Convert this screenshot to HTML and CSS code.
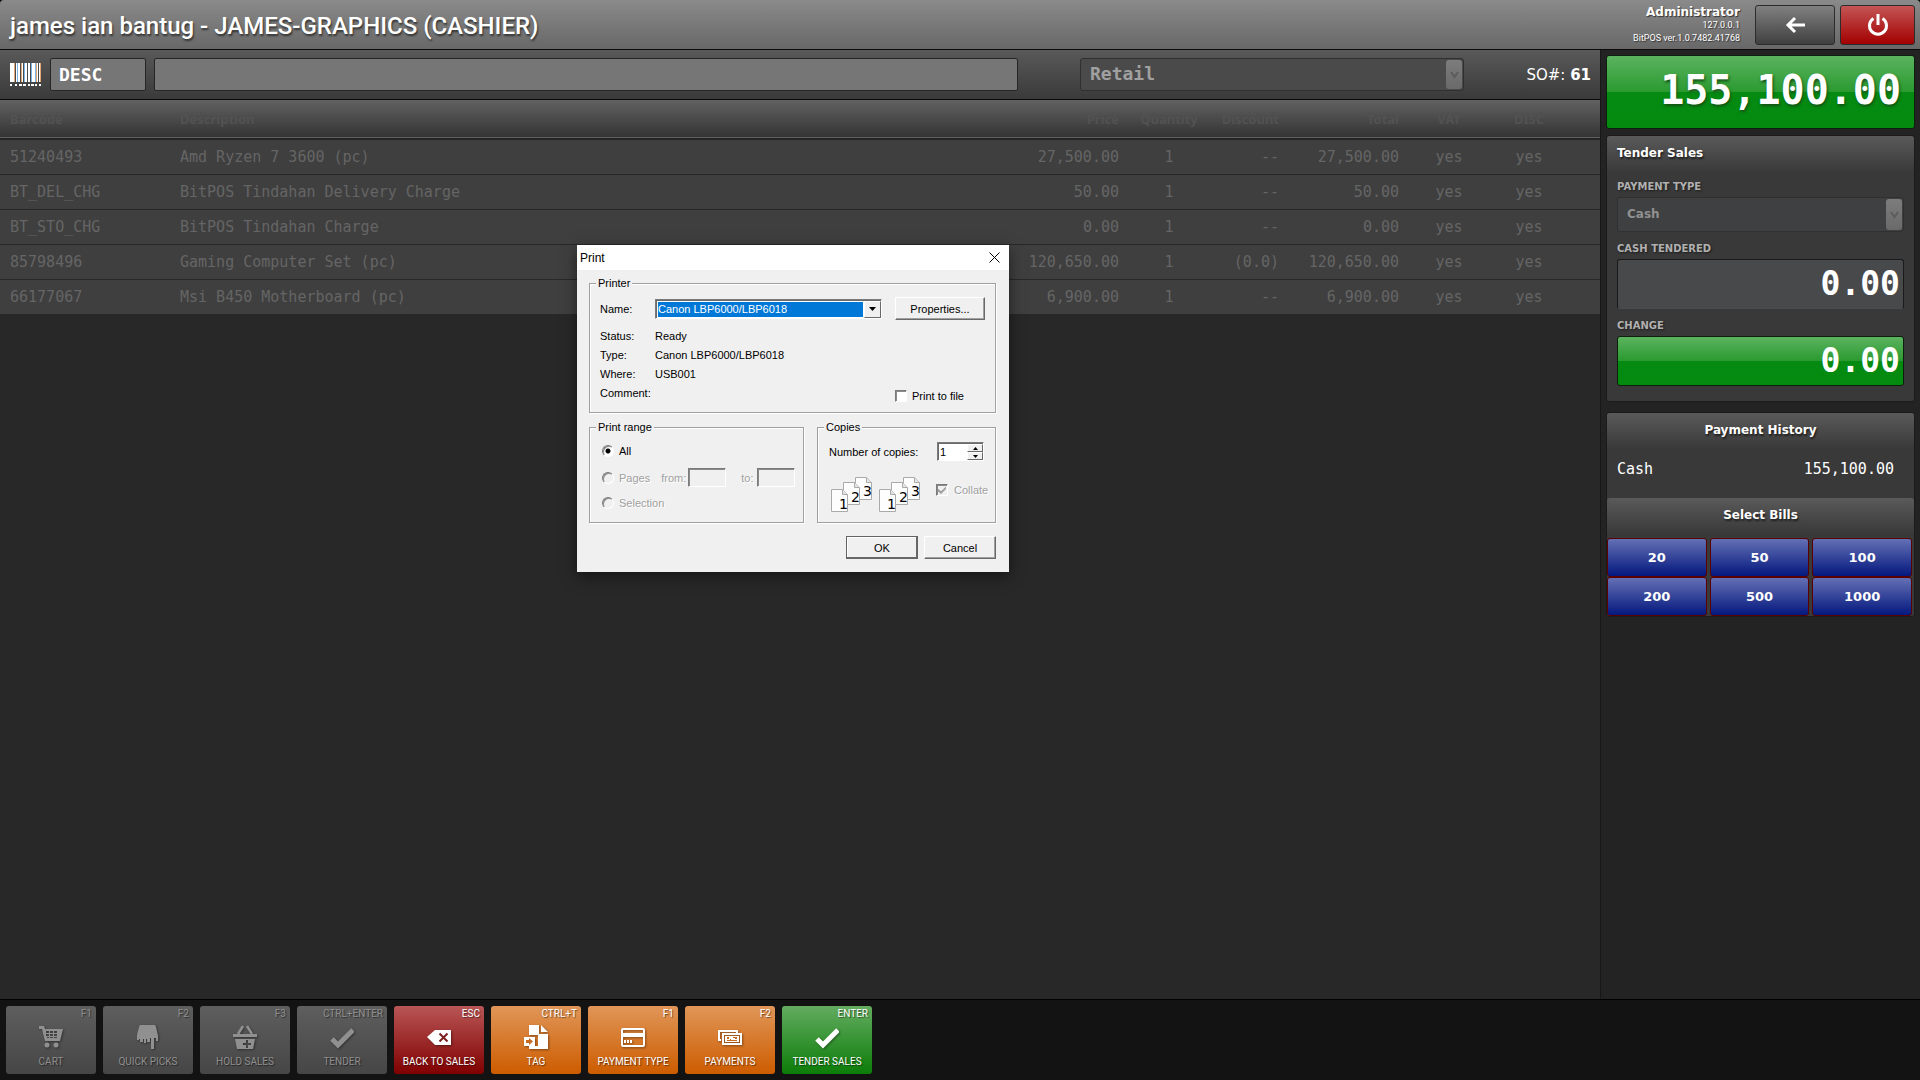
FILE: index.html
```html
<!DOCTYPE html>
<html lang="en">
<head>
<meta charset="utf-8">
<title>BitPOS</title>
<link rel="stylesheet" href="styles.css">
</head>
<body>
<div class="app">
  <header class="titlebar">
    <h1 class="title">james ian bantug - JAMES-GRAPHICS (CASHIER)</h1>
    <div class="user">
      <strong class="user-name">Administrator</strong>
      <span>127.0.0.1</span>
      <span>BitPOS ver.1.0.7482.41768</span>
    </div>
    <button class="head-btn back" aria-label="Back">
      <svg width="20" height="18" viewBox="0 0 20 18"><path d="M10 2 3 9l7 7M3 9h17" fill="none" stroke="#fff" stroke-width="3"/></svg>
    </button>
    <button class="head-btn power" aria-label="Power">
      <svg width="22" height="24" viewBox="0 0 22 24"><path d="M6.500 5.500a8.500 8.500 0 1 0 9 0" fill="none" stroke="#fff" stroke-width="3"/><path d="M11 1v11" stroke="#fff" stroke-width="3"/></svg>
    </button>
  </header>

  <div class="work">
    <main class="sales">
      <div class="toolbar">
        <svg class="barcode" width="31" height="23" viewBox="0 0 31 23" shape-rendering="crispEdges">
          <path fill="#fff" d="M0 0h4v19H0zM6 0h1v19H6zM8 0h2v19H8zM12 0h1v19h-1zM15 0h2v19h-2zM18 0h2v19h-2zM22 0h3v19h-3zM27 0h1v19h-1zM29 0h1v19h-1zM0 21h2v2H0zM5 21h2v2H5zM9 21h3v2H9zM13 21h3v2h-3zM18 21h2v2h-2zM21 21h3v2h-3zM25 21h2v2h-2zM29 21h2v2h-2z"/>
          <path fill="#e0a870" d="M4 0h1v19H4zM11 0h1v19h-1zM26 0h1v19h-1zM30 0h1v19h-1z"/>
          <path fill="#7cb4e8" d="M7 0h1v19H7zM14 0h1v19h-1zM21 0h1v19h-1zM25 0h1v19h-1z"/>
        </svg>
        <input class="field mode" type="text" value="DESC" aria-label="Search mode">
        <input class="field search" type="text" aria-label="Search item">
        <div class="picker price-level">
          <select aria-label="Price level" disabled><option>Retail</option></select>
          <span class="thumb"><svg width="9" height="8" viewBox="0 0 9 8"><path d="M1 1l3.500 5L8 1" fill="none" stroke="#5c5c5c" stroke-width="2"/></svg></span>
        </div>
        <div class="order">SO#: <b>61</b></div>
      </div>

      <table class="items">
        <colgroup><col class="c-code"><col><col class="c-wide"><col class="c-slim"><col class="c-slim"><col class="c-total"><col class="c-slim"><col class="c-last"></colgroup>
        <thead>
          <tr><th>Barcode</th><th>Description</th><th class="num">Price</th><th class="mid">Quantity</th><th class="num">Discount</th><th class="num">Total</th><th class="mid">VAT</th><th class="mid">DISC</th></tr>
        </thead>
        <tbody>
          <tr><td>51240493</td><td>Amd Ryzen 7 3600 (pc)</td><td class="num">27,500.00</td><td class="mid">1</td><td class="num">--</td><td class="num">27,500.00</td><td class="mid">yes</td><td class="mid">yes</td></tr>
          <tr><td>BT_DEL_CHG</td><td>BitPOS Tindahan Delivery Charge</td><td class="num">50.00</td><td class="mid">1</td><td class="num">--</td><td class="num">50.00</td><td class="mid">yes</td><td class="mid">yes</td></tr>
          <tr><td>BT_STO_CHG</td><td>BitPOS Tindahan Charge</td><td class="num">0.00</td><td class="mid">1</td><td class="num">--</td><td class="num">0.00</td><td class="mid">yes</td><td class="mid">yes</td></tr>
          <tr><td>85798496</td><td>Gaming Computer Set (pc)</td><td class="num">120,650.00</td><td class="mid">1</td><td class="num">(0.0)</td><td class="num">120,650.00</td><td class="mid">yes</td><td class="mid">yes</td></tr>
          <tr><td>66177067</td><td>Msi B450 Motherboard (pc)</td><td class="num">6,900.00</td><td class="mid">1</td><td class="num">--</td><td class="num">6,900.00</td><td class="mid">yes</td><td class="mid">yes</td></tr>
        </tbody>
      </table>
    </main>

    <aside class="side">
      <div class="grand-total">155,100.00</div>

      <section class="panel tender">
        <h2 class="panel-head">Tender Sales</h2>
        <div class="form">
          <label for="paytype">PAYMENT TYPE</label>
          <div class="picker pay">
            <select id="paytype" disabled><option>Cash</option></select>
            <span class="thumb"><svg width="9" height="8" viewBox="0 0 9 8"><path d="M1 1l3.500 5L8 1" fill="none" stroke="#5c5c5c" stroke-width="2"/></svg></span>
          </div>
          <label for="cash">CASH TENDERED</label>
          <input id="cash" class="amount" type="text" value="0.00">
          <label for="change">CHANGE</label>
          <input id="change" class="amount change" type="text" value="0.00" readonly>
        </div>
      </section>

      <section class="panel">
        <h2 class="panel-head center">Payment History</h2>
        <div class="history"><span>Cash</span><span>155,100.00</span></div>
        <h2 class="panel-head center">Select Bills</h2>
        <div class="bills">
          <button>20</button><button>50</button><button>100</button>
          <button>200</button><button>500</button><button>1000</button>
        </div>
      </section>
    </aside>
  </div>

  <footer class="actions">
    <button class="act" disabled><kbd>F1</kbd>
      <svg width="24" height="24" viewBox="0 0 24 24"><path fill="currentColor" fill-rule="evenodd" d="M0 1h5l1 3h18l-3 12H6L3 4H0zM7 6v2h3V6zm4 0v2h3V6zm4 0v2h3V6zm-8 3v2h3V9zm4 0v2h3V9zm4 0v2h3V9zm-7 3v1h2v-1zm3 0v1h3v-1zm4 0v1h3v-1z"/><circle cx="8" cy="20" r="2.500" fill="currentColor"/><circle cx="17" cy="20" r="2.500" fill="currentColor"/></svg>
      <span>CART</span></button>
    <button class="act" disabled><kbd>F2</kbd>
      <svg width="24" height="24" viewBox="0 0 24 24"><path fill="currentColor" d="M4 0h15l1 2 2 9v5h-2v-3h-2v11h-3V13h-1v4h-3v-3h-1v4H8v-4H7v3H4v-3H3v1H1v-5L3 2z"/></svg>
      <span>QUICK PICKS</span></button>
    <button class="act" disabled><kbd>F3</kbd>
      <svg width="24" height="24" viewBox="0 0 24 24"><path d="M10 1 5 9M14 1l5 8" stroke="currentColor" stroke-width="2.500" fill="none"/><path fill="currentColor" fill-rule="evenodd" d="M0 9h24v3H0zM2 14h20l-2 10H4zM13 15h2v3h3v2h-3v3h-2v-3h-3v-2h3z"/></svg>
      <span>HOLD SALES</span></button>
    <button class="act" disabled><kbd>CTRL+ENTER</kbd>
      <svg width="24" height="24" viewBox="0 0 24 24"><path d="M2 14l6 6L23 5" stroke="currentColor" stroke-width="5" fill="none"/></svg>
      <span>TENDER</span></button>
    <button class="act red"><kbd>ESC</kbd>
      <svg width="24" height="24" viewBox="0 0 24 24"><path fill="#fff" d="M8 5h16v15H8l-8-8z"/><path d="M12.500 8.500l8 8M20.500 8.500l-8 8" stroke="#7d2020" stroke-width="2"/></svg>
      <span>BACK TO SALES</span></button>
    <button class="act orange"><kbd>CTRL+T</kbd>
      <svg width="24" height="24" viewBox="0 0 24 24"><path fill="#fff" d="M5 0h10v9h9v15H5v-3h9V10H5zM17 0v7h7z"/><path fill="#fff" d="M0 12h11v9H0z"/><path fill="#c66a20" d="M2 15h3v-2l4 3.500L5 20v-2H2z"/></svg>
      <span>TAG</span></button>
    <button class="act orange"><kbd>F1</kbd>
      <svg width="24" height="24" viewBox="0 0 24 24"><rect x="1" y="4" width="22" height="17" rx="1" fill="none" stroke="#fff" stroke-width="2"/><path fill="#fff" d="M1 8h22v4H1zM3 15h2v3H3zM6 15h2v3H6zM9 15h2v3H9z"/></svg>
      <span>PAYMENT TYPE</span></button>
    <button class="act orange"><kbd>F2</kbd>
      <svg width="24" height="24" viewBox="0 0 24 24"><path d="M3 15H1V6h18v2" stroke="#fff" stroke-width="2" fill="none"/><path fill="#fff" fill-rule="evenodd" d="M4 8h20v12H4zM6 10v8h16v-8z"/><path fill="#fff" d="M7 11h14v6H7z"/><path fill="#c66a20" d="M9 12h2v2H9zM15 12h2v1h-2zM12 14h1v1h-1zM17 12h2v2h-2zM9 15h10v1H9z"/></svg>
      <span>PAYMENTS</span></button>
    <button class="act green"><kbd>ENTER</kbd>
      <svg width="24" height="24" viewBox="0 0 24 24"><path d="M2 14l6 6L23 5" stroke="#fff" stroke-width="5" fill="none"/></svg>
      <span>TENDER SALES</span></button>
  </footer>
</div>

<div class="dialog" role="dialog" aria-labelledby="dlg-title">
  <div class="dlg-bar">
    <span id="dlg-title">Print</span>
    <button class="dlg-close" aria-label="Close"><svg width="11" height="11" viewBox="0 0 11 11"><path d="M.5.5l10 10M10.500.5l-10 10" stroke="#000" fill="none"/></svg></button>
  </div>
  <div class="dlg-body">
    <fieldset class="grp printer">
      <legend>Printer</legend>
      <div class="name-row">
        <label for="pname">Name:</label>
        <div class="combo">
          <select id="pname"><option>Canon LBP6000/LBP6018</option></select>
          <span class="combo-btn"><svg width="7" height="4" viewBox="0 0 7 4"><path d="M0 0h7L3.500 4z"/></svg></span>
        </div>
        <button class="btn3d prop">Properties...</button>
      </div>
      <div class="info-row">
        <dl class="info">
          <dt>Status:</dt><dd>Ready</dd>
          <dt>Type:</dt><dd>Canon LBP6000/LBP6018</dd>
          <dt>Where:</dt><dd>USB001</dd>
          <dt>Comment:</dt><dd></dd>
        </dl>
        <label class="check to-file"><input type="checkbox">Print to file</label>
      </div>
    </fieldset>
    <div class="pair">
      <fieldset class="grp range">
        <legend>Print range</legend>
        <label class="check"><input type="radio" name="range" checked>All</label>
        <div class="pages">
          <label class="check dim"><input type="radio" name="range" disabled>Pages</label>
          <label class="dim from" for="from">from:</label><input class="sunk" id="from" type="text" disabled>
          <label class="dim to" for="to">to:</label><input class="sunk" id="to" type="text" disabled>
        </div>
        <label class="check dim"><input type="radio" name="range" disabled>Selection</label>
      </fieldset>
      <fieldset class="grp copies">
        <legend>Copies</legend>
        <div class="count">
          <label for="copies">Number of copies:</label>
          <div class="spin">
            <input id="copies" type="text" value="1">
            <div class="spin-btns">
              <button aria-label="More"><svg width="5" height="3" viewBox="0 0 5 3"><path d="M0 3h5L2.500 0z"/></svg></button>
              <button aria-label="Less"><svg width="5" height="3" viewBox="0 0 5 3"><path d="M0 0h5L2.500 3z"/></svg></button>
            </div>
          </div>
        </div>
        <div class="collate">
          <svg class="sheets" width="92" height="38" viewBox="0 0 92 38">
            <defs><g id="sheet"><path d="M.5.5h11l5 5v17H.5z" fill="#fdfdfd" stroke="#aaa"/><path d="M11.500.5v5h5" fill="#e4e4e4" stroke="#aaa"/></g></defs>
            <g class="sheet-no">
              <use href="#sheet" x="24" y="1"/><text x="32" y="20">3</text>
              <use href="#sheet" x="12" y="6"/><text x="20" y="26">2</text>
              <use href="#sheet" x="0" y="13"/><text x="8" y="33">1</text>
              <use href="#sheet" x="72" y="1"/><text x="80" y="20">3</text>
              <use href="#sheet" x="60" y="6"/><text x="68" y="26">2</text>
              <use href="#sheet" x="48" y="13"/><text x="56" y="33">1</text>
            </g>
          </svg>
          <label class="check dim"><input type="checkbox" checked disabled>Collate</label>
        </div>
      </fieldset>
    </div>
    <div class="dlg-btns">
      <button class="btn3d default">OK</button>
      <button class="btn3d">Cancel</button>
    </div>
  </div>
</div>
</body>
</html>
```
FILE: styles.css
```css
* { box-sizing: border-box; }
body {
  margin: 0;
  background: #000;
  color: #fff;
  font: 12px/16px "DejaVu Sans", Verdana, sans-serif;
}
button, input, select { font: inherit; color: inherit; margin: 0; }
button { padding: 0; }
h1, h2, dl, dd { margin: 0; }

.app {
  min-height: 100vh;
  display: flex;
  flex-direction: column;
  border-radius: 4px 4px 0 0;
  overflow: hidden;
  background: #282828;
}

/* title bar */
.titlebar {
  display: flex;
  align-items: center;
  gap: 5px;
  height: 50px;
  padding: 0 5px 0 10px;
  border-bottom: 1px solid #0a0a0a;
  background: linear-gradient(#8a8a8a, #686868);
}
.title {
  flex: 1;
  padding-top: 2px;
  font: 500 24px/32px Roboto, sans-serif;
  text-shadow: 1px 2px 2px #333;
}
.user {
  display: flex;
  flex-direction: column;
  align-items: flex-end;
  margin-right: 10px;
  font: 9px/13px Roboto, sans-serif;
  text-shadow: 1px 1px 1px #333;
}
.user-name { font: bold 12px/14px "DejaVu Sans", sans-serif; }
.head-btn {
  display: flex;
  align-items: center;
  justify-content: center;
  height: 40px;
  border: 1px solid #2c2c2c;
  border-radius: 3px;
}
.back { width: 80px; background: linear-gradient(#808080, #404040); }
.power { width: 75px; background: linear-gradient(#c45555, #a30000); }

.work { flex: 1; display: flex; }
.sales { flex: 1; min-width: 0; border-right: 1px solid #171717; background: #282828; }

/* search toolbar */
.toolbar {
  display: flex;
  align-items: center;
  height: 50px;
  padding: 0 9px 0 10px;
  border-bottom: 1px solid #0a0a0a;
  background: linear-gradient(#595959, #3a3a3a);
}
.barcode { margin-right: 9px; }
.field {
  height: 33px;
  border: 1px solid #262626;
  border-radius: 2px;
  background: #767676;
  font: bold 18px/24px "DejaVu Sans Mono", monospace;
  padding: 0 8px;
}
.mode { width: 96px; margin-right: 8px; }
.search { flex: 1; min-width: 0; }
.picker { display: grid; }
.picker select, .picker .thumb { grid-area: 1 / 1; }
.picker select {
  appearance: none;
  opacity: 1;
  width: 100%;
  border: 1px solid #303030;
  border-radius: 3px;
  color: #a0a0a0;
  padding: 0 9px 2px;
}
.thumb {
  justify-self: end;
  display: flex;
  align-items: center;
  justify-content: center;
  width: 16px;
  margin: 2px;
  border-radius: 3px;
  background: linear-gradient(#7c7c7c, #6a6a6a);
}
.price-level { width: 384px; height: 33px; margin: 0 0 0 62px; }
.price-level select { background: #4a4a4a; font: bold 18px/24px "DejaVu Sans Mono", monospace; }
.order { width: 127px; text-align: right; font-size: 15px; }

/* item grid */
.items { width: 100%; table-layout: fixed; border-collapse: collapse; }
.c-code { width: 170px; }
.c-wide { width: 120px; }
.c-total { width: 120px; }
.c-slim { width: 80px; }
.c-last { width: 111px; }
.items th, .items td { padding: 0 10px; text-align: left; white-space: nowrap; }
.items .num { text-align: right; }
.items .mid { text-align: center; }
.items th:last-child, .items td:last-child { padding-right: 41px; }
.items thead tr { height: 39px; background: linear-gradient(#616161, #343434); border-bottom: 2px solid #252525; }
.items th { font: bold 13px/18px "Noto Sans", sans-serif; color: #525252; }
.items tbody tr { height: 35px; background: #3f3f3f; border-bottom: 1px solid #282828; }
.items td { font: 15px/18px "DejaVu Sans Mono", monospace; color: #656565; }

/* side column */
.side {
  width: 319px;
  padding: 5px 5px 0;
  background: #232323;
}
.grand-total {
  height: 74px;
  margin-bottom: 6px;
  padding: 0 13px;
  border: 1px solid #0d1f0d;
  border-radius: 3px;
  background: linear-gradient(#5cb35f, #2a9a30 50%, #058b12 50%, #048a0e);
  font: bold 40px/69px "DejaVu Sans Mono", monospace;
  text-align: right;
  text-shadow: 1px 2px 3px #145014;
}
.panel {
  border: 1px solid #1b1b1b;
  border-radius: 3px;
  background: #393939;
  margin-bottom: 10px;
}
.panel-head {
  height: 38px;
  padding: 0 10px;
  border-radius: 3px 3px 0 0;
  background: linear-gradient(#5a5a5a, #393939 36px);
  font: bold 12px/35px "DejaVu Sans", sans-serif;
  text-shadow: 1px 2px 2px #1c1c1c;
}
.center { text-align: center; }
.form { display: flex; flex-direction: column; padding: 6px 10px 15px; }
.form label { font: bold 10px/14px "DejaVu Sans", sans-serif; color: #b0b0b0; text-shadow: 1px 1px 2px #1c1c1c; margin-bottom: 3px; }
.pay { height: 35px; margin-bottom: 10px; }
.pay select { background: #3f4042; font-weight: bold; color: #909090; }
.amount {
  width: 100%;
  height: 50px;
  margin-bottom: 10px;
  padding: 0 3px 2px;
  border: 1px solid #1a1a1a;
  border-bottom-color: #4a4b4d;
  border-radius: 3px;
  background: #48494b;
  font: bold 33px/40px "DejaVu Sans Mono", monospace;
  text-align: right;
}
.change { margin-bottom: 0; border-color: #0d1f0d; background: linear-gradient(#5cb35f, #2a9a30 50%, #058b12 50%, #048a0e); }
.history {
  display: flex;
  justify-content: space-between;
  height: 47px;
  padding: 9px 20px 0 10px;
  font: 15px/18px "DejaVu Sans Mono", monospace;
}
.bills { display: grid; grid-template-columns: repeat(3, 1fr); gap: 0 3px; padding: 2px 2px 0 0; }
.bills button {
  height: 39px;
  border: 1px solid #5a0000;
  border-radius: 3px;
  background: linear-gradient(#6470b4, #04187e);
  font-size: 13px;
  font-weight: bold;
}

/* action bar */
.actions {
  display: flex;
  flex-wrap: wrap;
  gap: 7px;
  padding: 6px;
  border-top: 1px solid #000;
  background: #131313;
}
.act {
  display: flex;
  flex-direction: column;
  align-items: center;
  width: 90px;
  height: 68px;
  padding: 1px 4px 0;
  border: 0;
  border-radius: 3px;
  background: linear-gradient(#5e5e5e, #464646);
  color: #909090;
  font: 10px/14px Roboto, sans-serif;
  text-shadow: 1px 1px 1px rgba(0, 0, 0, .5);
}
.act kbd { align-self: flex-end; font: inherit; }
.act svg { margin: 4px 0 6px; flex: none; filter: drop-shadow(1px 1px 1px rgba(0, 0, 0, .4)); }
.act span { white-space: nowrap; }
.red, .orange, .green { color: #fff; }
.red { background: linear-gradient(#b95656, #800000); }
.orange { background: linear-gradient(#e09658, #cd5c00); }
.green { background: linear-gradient(#63ac60, #0c7c08); }

/* print dialog */
.dialog {
  position: absolute;
  left: 577px;
  top: 245px;
  width: 432px;
  background: #f0f0f0;
  color: #000;
  font: 11px/14px "Liberation Sans", Arial, sans-serif;
  box-shadow: 0 4px 14px rgba(0, 0, 0, .5);
}
.dlg-bar { display: flex; justify-content: space-between; align-items: center; height: 25px; padding: 0 9px 0 3px; background: #fff; }
.dlg-bar span { font-size: 12px; }
.dlg-close { display: flex; border: 0; background: none; }
.dlg-body { padding: 6px 13px 13px 12px; }
.grp { position: relative; min-width: 0; margin: 0; padding: 0 10px; border: 1px solid #a0a0a0; box-shadow: 1px 1px 0 #fff, inset 1px 1px 0 #fff; }
.grp legend { padding: 0 2px; margin-left: -4px; background: #f0f0f0; }
.printer { height: 137px; }
.name-row { display: flex; align-items: center; margin-top: 7px; }
.name-row label { width: 55px; }
.combo { display: grid; width: 227px; height: 20px; margin-right: 13px; border: 1px solid; border-color: #7a7a7a #fff #fff #7a7a7a; box-shadow: inset 1px 1px 0 #696969; background: #fff; }
.combo select, .combo-btn { grid-area: 1 / 1; }
.combo select {
  appearance: none;
  width: 205px;
  margin: 2px 1px 1px 2px;
  padding: 0;
  border: 0;
  background: #0078d7;
  color: #fff;
}
.combo-btn, .spin-btns button { display: flex; align-items: center; justify-content: center; border: 1px solid; border-color: #fff #696969 #696969 #fff; background: #f0f0f0; }
.combo-btn { justify-self: end; width: 17px; margin-top: 1px; pointer-events: none; }
.btn3d {
  width: 72px;
  height: 23px;
  border: 1px solid;
  border-color: #fff #696969 #696969 #fff;
  background: #f0f0f0;
  box-shadow: inset -1px -1px 0 #a0a0a0;
}
.prop { width: 90px; }
.default { border-color: #646464; box-shadow: inset -1px -1px 0 #696969, inset 1px 1px 0 #fff; }
.info-row { display: flex; justify-content: space-between; align-items: flex-end; margin-top: 7px; }
.info { display: grid; grid-template-columns: 55px auto; line-height: 19px; }
.check { display: flex; align-items: center; gap: 5px; }
.to-file { width: 90px; }
.check input { appearance: none; width: 12px; height: 12px; flex: none; border: 1px solid; border-color: #7a7a7a #fff #fff #7a7a7a; box-shadow: inset 1px 1px 0 #8a8a8a; background: #fff; }
.check input[type="radio"] { border-radius: 50%; }
.check input[type="radio"]:checked { background: radial-gradient(#000 2px, #fff 3px); }
.check input:disabled { background: #f0f0f0; }
.dim, .dim input { color: #a0a0a0; text-shadow: 1px 1px 0 #fff; }
.pair { display: flex; justify-content: space-between; margin-top: 7px; }
.range, .copies { height: 103px; }
.range { width: 215px; padding: 0 6px 0 12px; }
.range legend { margin-left: -6px; }
.copies { width: 179px; }
.range > .check { margin-top: 10px; height: 14px; }
.pages { display: flex; align-items: center; height: 19px; margin-top: 10px; }
.range .pages + .check { margin-top: 9px; }
.from { margin: 0 2px 0 11px; }
.to { margin: 0 3px 0 15px; }
.sunk { width: 38px; height: 19px; border: 1px solid; border-color: #7a7a7a #fff #fff #7a7a7a; box-shadow: inset 1px 1px 0 #8a8a8a; background: #f0f0f0; }
.count { display: flex; align-items: center; justify-content: space-between; margin-top: 8px; padding: 0 1px; }
.spin { display: flex; width: 47px; height: 19px; border: 1px solid; border-color: #7a7a7a #fff #fff #7a7a7a; box-shadow: inset 1px 1px 0 #696969; background: #fff; }
.spin input { flex: 1; width: 0; min-width: 0; border: 0; padding: 0 2px; background: none; }
.spin-btns { display: grid; width: 16px; margin-top: 1px; }
.spin-btns button { min-height: 0; }
.collate { display: flex; align-items: center; margin: 15px -8px 0 0; }
.collate .check { margin: 0 0 10px 13px; gap: 6px; }
.sheets { flex: none; margin-left: 3px; }
.sheet-no { font: 14px "DejaVu Sans", sans-serif; }
.collate input::before {
  content: "";
  display: block;
  width: 8px;
  height: 8px;
  margin: 1px;
  background: #a0a0a0;
  clip-path: polygon(0 35%, 38% 65%, 100% 5%, 100% 38%, 38% 100%, 0 70%);
}
.dlg-btns { display: flex; justify-content: flex-end; gap: 6px; margin-top: 13px; }
```
